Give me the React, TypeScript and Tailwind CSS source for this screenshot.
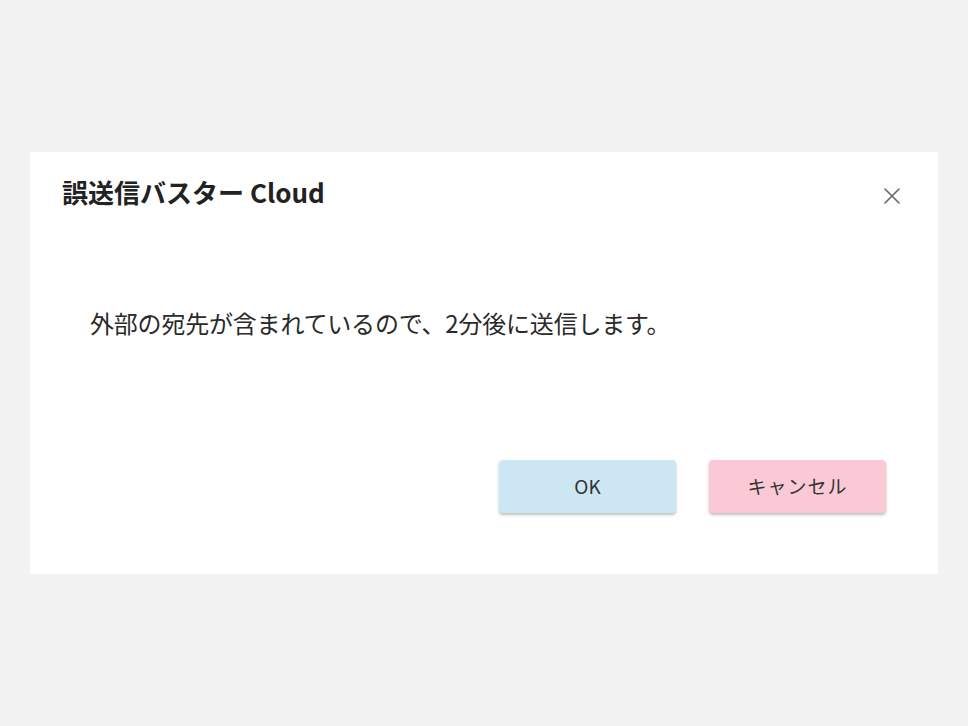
import React from "react";

export default function App() {
  return (
    <div
      className="w-[968px] h-[726px] bg-[#f2f2f2] pt-[152px] pl-[30px]"
      style={{ fontFamily: '"Noto Sans CJK JP", "Noto Sans", sans-serif' }}
    >
      <div className="w-[908px] h-[422px] bg-white flex flex-col">
        <div className="flex items-start justify-between pl-[32px] pr-[34px]">
          <h1 className="mt-[23px] text-[26px] leading-[34px] font-bold text-[#222]">
            誤送信バスター Cloud
          </h1>
          <button className="mt-[32px] w-[24px] h-[24px] flex items-center justify-center text-[#666]">
            <svg width="20" height="20" viewBox="0 0 20 20" fill="none" stroke="currentColor" strokeWidth="1.6" strokeLinecap="round">
              <path d="M3 3 L17 17 M17 3 L3 17" />
            </svg>
          </button>
        </div>
        <p className="mt-[98px] ml-[60px] text-[24px] leading-[32px] text-[#2a2a2a] tracking-[-0.2px]">
          外部の宛先が含まれているので、2分後に送信します。
        </p>
        <div className="mt-[121px] flex justify-end gap-[33px] pr-[52px]">
          <button className="w-[177px] h-[53px] rounded-[4px] bg-[#cde6f4] text-[19px] text-[#333] shadow-[0_2px_3px_rgba(0,0,0,0.25)]">
            OK
          </button>
          <button className="w-[177px] h-[53px] rounded-[4px] bg-[#fbc9d6] text-[19px] text-[#333] shadow-[0_2px_3px_rgba(0,0,0,0.25)] tracking-[1px]">
            キャンセル
          </button>
        </div>
      </div>
    </div>
  );
}
